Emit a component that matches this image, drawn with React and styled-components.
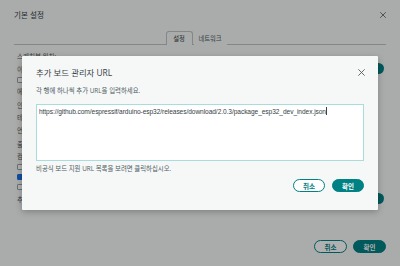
import styled, { createGlobalStyle } from "styled-components";

const GlobalStyle = createGlobalStyle`
  * { box-sizing: border-box; }
  body {
    margin: 0;
    font-family: "Open Sans", "Noto Sans CJK KR", sans-serif;
    color: #4e5b61;
  }
`;

const teal = "#008184";

const Screen = styled.div`
  position: relative;
  width: 400px;
  height: 266px;
  overflow: hidden;
  background: #f7f9f9;
`;

const Prefs = styled.div`
  height: 100%;
  display: flex;
  flex-direction: column;
  padding: 0 14px;
`;

const PrefsHeader = styled.div`
  height: 31px;
  display: flex;
  align-items: center;
  justify-content: space-between;
  padding-bottom: 2px;
`;

const PrefsTitle = styled.div`
  font-size: 7.6px;
  color: #374146;
`;

const CloseButton = styled.button`
  border: 0;
  background: none;
  padding: 0;
  width: ${(p) => p.$size}px;
  height: ${(p) => p.$size}px;
  display: flex;
  align-items: center;
  justify-content: center;
  color: #4e5b61;
  margin-right: ${(p) => p.$offset || 0}px;
`;

const Tabs = styled.div`
  display: flex;
  justify-content: center;
  gap: 1px;
  border-bottom: 1px solid #bfc3c4;
  padding-right: 8px;
`;

const Tab = styled.div`
  width: ${(p) => (p.$active ? 27 : 33)}px;
  height: 14px;
  display: flex;
  align-items: center;
  justify-content: center;
  font-size: 6.3px;
  color: ${(p) => (p.$active ? "#374146" : "#4e5b61")};
  border: 1px solid ${(p) => (p.$active ? "#bfc3c4" : "transparent")};
  border-bottom: 0;
  border-radius: 3px 3px 0 0;
  margin-bottom: -1px;
  background: #f7f9f9;
`;

const Settings = styled.div`
  display: flex;
  flex-direction: column;
  padding: 5px 2px 0 3px;
`;

const Row = styled.div`
  height: ${(p) => p.$h}px;
  display: flex;
  align-items: center;
  justify-content: space-between;
  gap: 6px;
  font-size: 6.5px;
  color: #4e5b61;
`;

const Label = styled.span`
  display: flex;
  align-items: center;
  gap: 4px;
  white-space: nowrap;
`;

const Check = styled.span`
  flex: none;
  width: 6px;
  height: 6px;
  border-radius: 1px;
  border: 1px solid ${(p) => (p.$on ? "#1a73e8" : "#9aa1a4")};
  background: ${(p) => (p.$on ? "#1a73e8" : "#fff")};
`;

const SmallTeal = styled.span`
  height: 11px;
  padding: 0 8px;
  border-radius: 6px;
  background: ${teal};
  color: #fff;
  font-size: 6px;
  display: flex;
  align-items: center;
`;

const Spacer = styled.div`
  flex: 1;
`;

const Footer = styled.div`
  display: flex;
  justify-content: flex-end;
  gap: 6px;
  padding-bottom: 13px;
`;

const Pill = styled.button`
  width: ${(p) => p.$w}px;
  height: 13px;
  border-radius: 7px;
  font-family: "Open Sans", "Noto Sans CJK KR", sans-serif;
  font-size: 6.5px;
  font-weight: 700;
  padding: 0;
  display: flex;
  align-items: center;
  justify-content: center;
  border: 1px solid ${teal};
  background: ${(p) => (p.$primary ? teal : "#fff")};
  color: ${(p) => (p.$primary ? "#fff" : teal)};
`;

const Backdrop = styled.div`
  position: absolute;
  inset: 0;
  background: rgba(0, 0, 0, 0.31);
  display: flex;
  align-items: center;
  justify-content: center;
`;

const Modal = styled.div`
  width: 356px;
  height: 154px;
  background: #f6f8f8;
  border-radius: 1px;
  box-shadow: 0 2px 6px rgba(0, 0, 0, 0.25);
  padding: 9px 14px 0 14px;
  display: flex;
  flex-direction: column;
`;

const ModalHeader = styled.div`
  height: 14px;
  display: flex;
  align-items: center;
  justify-content: space-between;
`;

const ModalTitle = styled.div`
  font-size: 8.4px;
  color: #374146;
`;

const Hint = styled.div`
  font-size: 6.4px;
  color: #4e5b61;
  margin-top: ${(p) => p.$top}px;
  line-height: 9px;
`;

const UrlBox = styled.div`
  margin-top: 9px;
  height: 57px;
  background: #fff;
  border: 1px solid #a9dcda;
  padding: 2px 2px;
  font-family: "Liberation Sans", Arial, sans-serif;
  font-size: 6.6px;
  letter-spacing: -0.07px;
  color: #374146;
  line-height: 9px;
`;

const Caret = styled.span`
  display: inline-block;
  width: 1px;
  height: 8px;
  background: #374146;
  vertical-align: -1px;
`;

const ModalFooter = styled.div`
  display: flex;
  justify-content: flex-end;
  gap: 7px;
  margin-top: 6px;
`;

function XIcon({ size }) {
  return (
    <svg width={size} height={size} viewBox="0 0 10 10" fill="none">
      <path d="M1.5 1.5l7 7M8.5 1.5l-7 7" stroke="currentColor" strokeWidth="1" />
    </svg>
  );
}

const rows = [
  { h: 12, text: "스케치북 위치:" },
  { h: 13, text: "이 경로", button: "찾아보기" },
  { h: 9, check: true, text: "스케치 안의 파일 보기" },
  { h: 14, text: "에디터 글꼴 크기:" },
  { h: 13, text: "인터페이스 스케일:" },
  { h: 12, text: "테마:" },
  { h: 14, text: "언어:" },
  { h: 13, text: "출력 시 자세히 표시:" },
  { h: 11, text: "컴파일러 경고:" },
  { h: 11, check: true, text: "업로드 후 코드 확인" },
  { h: 10, check: true, on: true, text: "자동 저장" },
  { h: 10, check: true, text: "에디터 빠른 제안" },
  { h: 13, text: "추가 보드 관리자 URL:", button: "추가" },
];

export default function App() {
  return (
    <>
      <GlobalStyle />
      <Screen>
        <Prefs>
          <PrefsHeader>
            <PrefsTitle>기본 설정</PrefsTitle>
            <CloseButton $size={8} $offset={-1}>
              <XIcon size={8} />
            </CloseButton>
          </PrefsHeader>
          <Tabs>
            <Tab $active>설정</Tab>
            <Tab>네트워크</Tab>
          </Tabs>
          <Settings>
            {rows.map((r) => (
              <Row key={r.text} $h={r.h}>
                <Label>
                  {r.check && <Check $on={r.on} />}
                  {r.text}
                </Label>
                {r.button && <SmallTeal>{r.button}</SmallTeal>}
              </Row>
            ))}
          </Settings>
          <Spacer />
          <Footer>
            <Pill $w={33}>취소</Pill>
            <Pill $w={33} $primary>
              확인
            </Pill>
          </Footer>
        </Prefs>
        <Backdrop>
          <Modal>
            <ModalHeader>
              <ModalTitle>추가 보드 관리자 URL</ModalTitle>
              <CloseButton $size={9} $offset={-2}>
                <XIcon size={9} />
              </CloseButton>
            </ModalHeader>
            <Hint $top={7}>각 행에 하나씩 추가 URL을 입력하세요.</Hint>
            <UrlBox>
              https://github.com/espressif/arduino-esp32/releases/download/2.0.3/package_esp32_dev_index.json
              <Caret />
            </UrlBox>
            <Hint $top={3}>비공식 보드 지원 URL 목록을 보려면 클릭하십시오.</Hint>
            <ModalFooter>
              <Pill $w={32}>취소</Pill>
              <Pill $w={32} $primary>
                확인
              </Pill>
            </ModalFooter>
          </Modal>
        </Backdrop>
      </Screen>
    </>
  );
}
